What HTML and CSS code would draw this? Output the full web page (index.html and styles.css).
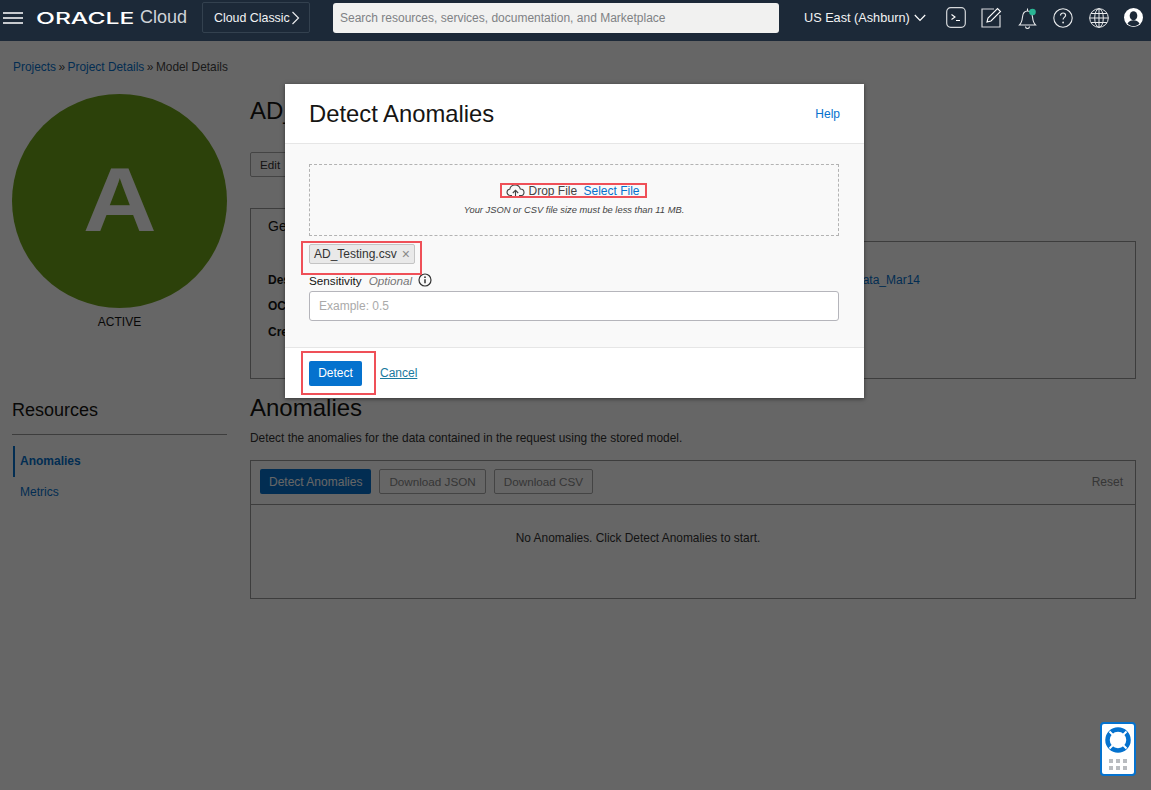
FILE: index.html
```html
<!DOCTYPE html>
<html lang="en">
<head>
<meta charset="utf-8">
<title>Detect Anomalies</title>
<link rel="stylesheet" href="styles.css">
</head>
<body>
<header class="topbar">
  <svg class="burger" width="20" height="12" viewBox="0 0 20 12"><path d="M0 1h20M0 6h20M0 11h20" stroke="#fff" stroke-width="1.6" fill="none"/></svg>
  <div class="brand"><span class="brand-oracle">ORACLE</span><span class="brand-cloud">Cloud</span></div>
  <div class="classic"><span>Cloud Classic</span>
    <svg width="9" height="14" viewBox="0 0 9 14"><path d="M1.5 1l6 6-6 6" stroke="#e8eaec" stroke-width="1.2" fill="none"/></svg>
  </div>
  <div class="search">Search resources, services, documentation, and Marketplace</div>
  <div class="region"><span>US East (Ashburn)</span>
    <svg width="12" height="8" viewBox="0 0 12 8"><path d="M.8 1l5.2 5.5L11.200 1" stroke="#fff" stroke-width="1.200" fill="none"/></svg>
  </div>
  <div class="tools">
    <svg width="20" height="21" viewBox="0 0 20 21"><rect x=".7" y=".7" width="18.600" height="19.600" rx="4" stroke="#d5d8db" stroke-width="1.200" fill="none"/><path d="M5.500 7.500l3.500 2.500-3.500 2.500M10 13.500h4" stroke="#fff" stroke-width="1.100" fill="none"/></svg>
    <svg width="21" height="21" viewBox="0 0 21 21"><path d="M13 2H1v18h18V8" stroke="#d5d8db" stroke-width="1.200" fill="none"/><path d="M6 15l1-4 9.500-9.500 3 3L10 14z" stroke="#fff" stroke-width="1.100" fill="none"/></svg>
    <svg width="20" height="22" viewBox="0 0 20 22"><path d="M1.500 18c2-2 2.500-3.500 3-8 .4-4 2.500-6 5-6s4.600 2 5 6c.5 4.500 1 6 3 8z" stroke="#e8eaec" stroke-width="1.100" fill="none"/><path d="M7.500 19.500a2 2 0 0 0 4 0" stroke="#e8eaec" stroke-width="1.100" fill="none"/><path d="M9.500 1.500v2.500" stroke="#e8eaec" stroke-width="1.100"/><circle cx="14.500" cy="5" r="3.300" fill="#2ab594"/></svg>
    <svg width="20" height="20" viewBox="0 0 20 20"><circle cx="10" cy="10" r="9.200" stroke="#e8eaec" stroke-width="1.100" fill="none"/><path d="M7.500 7.500c0-1.600 1.200-2.500 2.600-2.500s2.500 1 2.500 2.300c0 2-2.500 2.200-2.500 4.200" stroke="#e8eaec" stroke-width="1.200" fill="none"/><circle cx="10.100" cy="14.500" r=".9" fill="#e8eaec"/></svg>
    <svg width="20" height="20" viewBox="0 0 20 20"><g stroke="#e8eaec" stroke-width="1" fill="none"><circle cx="10" cy="10" r="9.300"/><ellipse cx="10" cy="10" rx="4.300" ry="9.300"/><path d="M10 .7v18.600M.7 10h18.600M2 5.500h16M2 14.500h16"/></g></svg>
    <svg class="tool-user" width="19" height="19" viewBox="0 0 19 19"><circle cx="9.500" cy="9.500" r="9.500" fill="#fff"/><ellipse cx="9.500" cy="7.800" rx="3.800" ry="4.600" fill="#1c2938"/><path d="M3.500 15.500c1.500-2.300 3.300-3.200 6-3.200s4.500.9 6 3.200c-1.600 1.700-3.700 2.700-6 2.700s-4.400-1-6-2.700z" fill="#1c2938"/></svg>
  </div>
</header>

<main class="page">
  <nav class="crumbs"><a>Projects</a><span class="sep">»</span><a>Project Details</a><span class="sep">»</span><span>Model Details</span></nav>
  <div class="columns">
    <aside class="side">
      <div class="avatar"><span class="avatar-letter">A</span></div>
      <div class="status">ACTIVE</div>
      <h2 class="res-title">Resources</h2>
      <ul class="res-list">
        <li class="res-item active">Anomalies</li>
        <li class="res-item">Metrics</li>
      </ul>
    </aside>
    <section class="content">
      <h1 class="model-title">AD_Model</h1>
      <div class="actions"><button class="ghost">Edit</button></div>
      <div class="tabs"><div class="tab">General Information</div></div>
      <div class="details">
        <div class="detail-row"><b>Description:</b><a class="detail-link">Data Asset: AD_Training_Data_Mar14</a></div>
        <div class="detail-row"><b>OCID:</b></div>
        <div class="detail-row"><b>Created:</b></div>
      </div>
      <h2 class="anom-title">Anomalies</h2>
      <p class="anom-desc">Detect the anomalies for the data contained in the request using the stored model.</p>
      <div class="anom-box">
        <div class="anom-tools">
          <button class="primary">Detect Anomalies</button>
          <button class="ghost disabled">Download JSON</button>
          <button class="ghost disabled">Download CSV</button>
          <span class="reset">Reset</span>
        </div>
        <div class="anom-empty">No Anomalies. Click Detect Anomalies to start.</div>
      </div>
    </section>
  </div>
</main>

<div class="overlay"></div>

<div class="modal">
  <div class="modal-head">
    <h2 class="modal-title">Detect Anomalies</h2>
    <a class="help">Help</a>
  </div>
  <div class="modal-body">
    <div class="drop">
      <div class="drop-line">
        <svg width="19" height="14" viewBox="0 0 19 14"><path d="M6 11.500H4.500C2.500 11.500 1 10.200 1 8.300c0-1.700 1.200-3 2.800-3.100C4.300 2.700 6.400 1 9 1c2.700 0 4.700 1.700 5.300 4 2 .1 3.700 1.500 3.700 3.400 0 1.800-1.500 3.100-3.500 3.100H13" stroke="#444" stroke-width="1.100" fill="none"/><path d="M9.500 13.800V6.500M6.800 9l2.700-2.700L12.200 9" stroke="#444" stroke-width="1.100" fill="none"/></svg>
        <span>Drop File</span><a class="select">&nbsp;Select File</a>
      </div>
      <div class="drop-note">Your JSON or CSV file size must be less than 11 MB.</div>
    </div>
    <div class="chip"><span>AD_Testing.csv</span><span class="chip-x">×</span></div>
    <div class="field-label"><span>Sensitivity</span><i class="optional">Optional</i>
      <svg width="14" height="14" viewBox="0 0 14 14"><circle cx="7" cy="7" r="6" stroke="#333" stroke-width="1.200" fill="none"/><path d="M7 6.200v4" stroke="#333" stroke-width="1.500"/><circle cx="7" cy="4.200" r=".9" fill="#333"/></svg>
    </div>
    <div class="input">Example: 0.5</div>
  </div>
  <div class="modal-foot">
    <button class="detect">Detect</button>
    <a class="cancel">Cancel</a>
  </div>
  <span class="mark mark-drop"></span>
  <span class="mark mark-chip"></span>
  <span class="mark mark-detect"></span>
</div>

<div class="widget">
  <svg width="26" height="26" viewBox="0 0 26 26"><circle cx="13" cy="13" r="10.500" stroke="#0572ce" stroke-width="4.500" fill="none"/><path d="M4.500 4.500l5 5M21.500 4.500l-5 5M4.500 21.500l5-5M21.500 21.500l-5-5" stroke="#fff" stroke-width="2"/></svg>
  <div class="dots"><i></i><i></i><i></i><i></i><i></i><i></i></div>
</div>
</body>
</html>
```
FILE: styles.css
```css
* { box-sizing: border-box; }
html, body { margin: 0; height: 100%; }
body {
  position: relative;
  height: 790px;
  overflow: hidden;
  background: #fff;
  color: #161513;
  font-family: "Liberation Sans", Arial, sans-serif;
  font-size: 12px;
}
a { color: #0572ce; }
button { font-family: inherit; }

/* Top bar */
.topbar {
  position: relative;
  z-index: 3;
  display: flex;
  align-items: center;
  height: 41px;
  padding-bottom: 6px;
  background: #1c2938;
  color: #fff;
}
.burger { margin-left: 3px; flex: none; }
.brand { display: flex; align-items: center; flex: none; margin-left: 13px; width: 166px; }
.brand-oracle {
  display: inline-block;
  flex: none;
  width: 98px;
  font-family: Inter, "Liberation Sans", sans-serif;
  font-size: 16px;
  font-weight: 500;
  transform: scaleX(1.540);
  transform-origin: left center;
}
.brand-cloud { margin-left: 6px; font-size: 18px; color: #cfd3d7; }
.classic {
  display: flex;
  flex: none;
  align-items: center;
  justify-content: space-between;
  width: 108px;
  height: 31px;
  padding: 0 9px 0 11px;
  border: 1px solid #33414f;
  border-radius: 2px;
  font-size: 12.400px;
  color: #f2f3f4;
  white-space: nowrap;
}
.search {
  flex: none;
  width: 446px;
  height: 30px;
  margin: 1px 0 0 23px;
  padding-left: 7px;
  background: #f1f1f0;
  border-radius: 3px;
  color: #7f8285;
  font-size: 12px;
  line-height: 30px;
}
.region {
  display: flex;
  flex: none;
  align-items: center;
  gap: 4px;
  margin-left: 25px;
  font-size: 12.700px;
  color: #f2f3f4;
  white-space: nowrap;
}
.tools {
  display: flex;
  flex: none;
  align-items: center;
  gap: 15.500px;
  margin-left: 20px;
}

/* Page */
.page { padding: 0 15px 0 12px; }
.crumbs { padding: 19px 0 0 1px; height: 53px; font-size: 11.900px; color: #444; line-height: 14px; }
.crumbs a { color: #0572ce; }
.sep { margin: 0 2.500px; }
.columns { display: flex; gap: 23px; }
.side { flex: none; width: 215px; }
.avatar {
  width: 215px;
  height: 214px;
  border-radius: 50%;
  background: #6fa31a;
  color: #fff;
  font-size: 91px;
  font-weight: 700;
  line-height: 212px;
  text-align: center;
}
.avatar-letter { display: inline-block; transform: scaleX(1.120); }
.status { margin-top: 7px; text-align: center; font-size: 12px; line-height: 14px; }
.res-title { margin: 70px 0 0; font-size: 18px; font-weight: 400; line-height: 22px; }
.res-list {
  list-style: none;
  margin: 13px 0 0;
  padding: 11px 0 0;
  border-top: 1px solid #999;
}
.res-item { height: 31px; padding-left: 7px; margin-left: 1px; line-height: 30px; color: #0572ce; }
.res-item.active { border-left: 2px solid #0572ce; padding-left: 5px; font-weight: 700; }
.content { flex: 1; min-width: 0; }
.model-title { margin: 2px 0 0; font-size: 24px; font-weight: 400; line-height: 30px; }
.actions { margin-top: 26px; }
.ghost {
  height: 25px;
  padding: 0 9px;
  background: #fff;
  border: 1px solid #aaa;
  border-radius: 2px;
  color: #333;
  font-size: 11.700px;
}
.tabs { margin-top: 31px; height: 33px; }
.tab {
  display: inline-block;
  height: 34px;
  padding: 9px 17px;
  background: #fff;
  border: 1px solid #999;
  border-bottom: 0;
  position: relative;
  z-index: 1;
  font-size: 14px;
}
.details { height: 138px; padding: 25px 215px 0 17px; border: 1px solid #999; }
.detail-row { display: flex; justify-content: space-between; height: 26px; line-height: 26px; }
.detail-link { color: #0572ce; }
.anom-title { margin: 14px 0 0; font-size: 24px; font-weight: 400; line-height: 30px; }
.anom-desc { margin: 7px 0 0; font-size: 11.900px; line-height: 16px; color: #333; }
.anom-box { margin-top: 14px; height: 139px; border: 1px solid #999; }
.anom-tools {
  display: flex;
  align-items: center;
  gap: 8px;
  height: 44px;
  padding: 0 12px 2px 9px;
  border-bottom: 1px solid #999;
}
.primary {
  height: 25px;
  padding: 0 9px;
  background: #0572ce;
  border: 0;
  border-radius: 2px;
  color: #fff;
  font-size: 12px;
}
.ghost.disabled { color: #888; }
.reset { margin-left: auto; color: #888; }
.anom-empty { padding: 26px 110px 0 0; font-size: 11.900px; text-align: center; line-height: 14px; color: #333; }

/* Overlay and modal */
.overlay { position: absolute; inset: 0; z-index: 2; background: rgba(0, 0, 0, .6); }
.modal {
  position: absolute;
  z-index: 3;
  left: 285px;
  top: 84px;
  width: 579px;
  height: 314px;
  background: #fff;
  box-shadow: 0 1px 4px rgba(0, 0, 0, .5);
}
.modal-head {
  display: flex;
  align-items: center;
  justify-content: space-between;
  height: 60px;
  padding: 0 24px;
  border-bottom: 1px solid #e6e6e6;
}
.modal-title { margin: 0; font-size: 23.800px; font-weight: 400; color: #161513; }
.help { font-size: 12px; }
.modal-body { height: 204px; padding: 20px 25px 0 24px; background: #f9f9f9; border-bottom: 1px solid #e6e6e6; }
.drop {
  height: 72px;
  padding-top: 17px;
  border: 1px dashed #b3b3b3;
  text-align: center;
}
.drop-line { display: flex; align-items: center; justify-content: center; gap: 3px; height: 17px; padding-right: 2px; font-size: 12px; color: #444; }
.select { color: #0572ce; text-decoration: underline; }
.drop-note { margin-top: 5px; font-size: 9.350px; font-style: italic; color: #444; line-height: 12px; }
.chip {
  display: flex;
  align-items: center;
  gap: 5px;
  width: fit-content;
  height: 20px;
  margin-top: 8px;
  padding: 0 4px;
  background: #e9e9e9;
  border: 1px solid #c4c4c4;
  border-radius: 2px;
  font-size: 12px;
  color: #333;
}
.chip-x { color: #888; font-size: 14px; line-height: 14px; }
.field-label {
  display: flex;
  align-items: center;
  height: 16px;
  margin-top: 8px;
  font-size: 11.700px;
  color: #161513;
}
.optional { margin: 0 6px 0 7px; color: #777; }
.input {
  height: 30px;
  margin-top: 3px;
  padding-left: 9px;
  background: #fff;
  border: 1px solid #b5b5bb;
  border-radius: 3px;
  color: #aaa;
  font-size: 12px;
  line-height: 28px;
}
.modal-foot { display: flex; align-items: center; gap: 18px; height: 50px; padding: 0 24px; }
.detect {
  width: 53px;
  height: 25px;
  padding: 0;
  background: #0572ce;
  border: 0;
  border-radius: 2px;
  color: #fff;
  font-size: 12px;
}
.cancel { color: #1a7a9e; font-size: 12px; text-decoration: underline; }
.mark { position: absolute; border: 2px solid #ef5058; pointer-events: none; }
.mark-drop { left: 215px; top: 99px; width: 147px; height: 15px; }
.mark-chip { left: 16px; top: 157px; width: 121px; height: 34px; }
.mark-detect { left: 16px; top: 267px; width: 75px; height: 44px; }

/* Help widget */
.widget {
  position: absolute;
  z-index: 3;
  left: 1100px;
  top: 722px;
  width: 36px;
  height: 54px;
  padding-top: 3px;
  background: #fff;
  border: 2px solid #0572ce;
  border-radius: 4px;
}
.widget svg { display: block; margin: 0 auto; }
.dots { display: grid; grid-template-columns: repeat(3, 4px); gap: 3px; justify-content: center; margin-top: 6px; }
.dots i { width: 4px; height: 4px; background: #b9bcc0; }
```
